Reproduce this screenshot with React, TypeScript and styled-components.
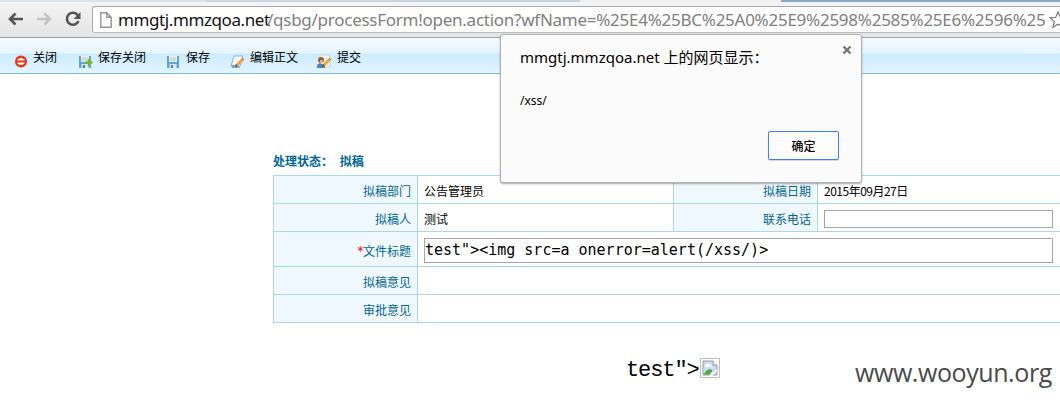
import React from "react";
import styled, { createGlobalStyle } from "styled-components";

const cjk = `"Noto Sans CJK SC"`;

const GlobalStyle = createGlobalStyle`
  * { box-sizing: border-box; }
  html, body { margin: 0; background: #fff; overflow: hidden; }
  body { font: 12px/16px ${cjk}, sans-serif; color: #000; }
`;

const Window = styled.div`
  position: relative;
  width: 1060px;
  height: 402px;
  overflow: hidden;
  display: flex;
  flex-direction: column;
`;

const TabStrip = styled.div`
  flex: none;
  display: flex;
  height: 2px;
  background: #e6eaee;
  border-bottom: 1px solid #9aa3aa;
`;

const TabEdge = styled.div<{ $w: number; $c: string }>`
  width: ${(p) => p.$w}px;
  height: 2px;
  background: ${(p) => p.$c};
`;

const BrowserBar = styled.div`
  flex: none;
  display: flex;
  align-items: flex-start;
  height: 36px;
  padding: 4px 0 0 8px;
  background: linear-gradient(#f4f4f4, #e4e4e4);
  border-bottom: 1px solid #a5a5a5;
`;

const NavIcon = styled.svg<{ $gap: number }>`
  flex: none;
  margin: 5px ${(p) => p.$gap}px 0 0;
`;

const AddressField = styled.div`
  flex: 1;
  display: flex;
  align-items: center;
  height: 27px;
  padding-left: 7px;
  background: #fff;
  border: 1px solid #a9a9a9;
  border-bottom-color: #bcbcbc;
  border-right: 0;
  border-radius: 3px 0 0 3px;
  overflow: hidden;
`;

const FieldIcon = styled.svg`
  flex: none;
`;

const Url = styled.div`
  flex: none;
  display: flex;
  width: 931px;
  margin-left: 6px;
  font: 17px/24px "Noto Sans", sans-serif;
  white-space: nowrap;
  color: #808080;
`;

const Host = styled.span`
  width: 149px;
  color: #111;
  letter-spacing: -0.4px;
`;

const Path = styled.span`
  letter-spacing: -0.26px;
`;

const ActionBar = styled.div`
  flex: none;
  display: flex;
  height: 36px;
  padding-left: 14px;
  background: linear-gradient(#f3faff 0, #e6f5ff 15px, #cbecff 16px, #e4f4ff 35px);
  border-bottom: 1px solid #7dbbe2;
`;

const Action = styled.div<{ $w: number }>`
  display: flex;
  width: ${(p) => p.$w}px;
  padding-top: 11px;
  white-space: nowrap;
`;

const ActionIcon = styled.svg`
  flex: none;
  margin: 5px 5px 0 0;
`;

const Status = styled.div`
  flex: none;
  margin: 79px 0 6px 273px;
  font-weight: 700;
  color: #069;
  white-space: pre;
  word-spacing: 4px;
`;

const Form = styled.div`
  flex: none;
  width: 800px;
  margin-left: 273px;
  border-top: 1px solid #aad7ea;
  border-left: 1px solid #aad7ea;
`;

const Row = styled.div<{ $h: number }>`
  display: flex;
  height: ${(p) => p.$h}px;
  border-bottom: 1px solid #aad7ea;
`;

const Label = styled.div`
  flex: none;
  display: flex;
  align-items: center;
  justify-content: flex-end;
  width: 144px;
  padding: 3px 6px 0 0;
  background: #f0f8ff;
  border-right: 1px solid #aad7ea;
  color: #069;
`;

const Required = styled.span`
  font: 12px/14px "DejaVu Sans Mono", monospace;
  letter-spacing: -1px;
  color: #f00;
`;

const Value = styled.div<{ $w?: number }>`
  flex: none;
  display: flex;
  align-items: center;
  width: ${(p) => (p.$w ? `${p.$w}px` : "auto")};
  padding: 3px 0 0 6px;
  border-right: ${(p) => (p.$w ? "1px solid #aad7ea" : "0")};
`;

const DateText = styled.span`
  letter-spacing: -0.5px;
`;

const Field = styled.div<{ $w: number; $h: number }>`
  width: ${(p) => p.$w}px;
  height: ${(p) => p.$h}px;
  padding-left: 0;
  border: 1px solid #a6a6a6;
  background: #fff;
  font: 15px/23px "DejaVu Sans Mono", monospace;
  white-space: pre;
`;

const Footer = styled.div`
  display: flex;
  align-items: flex-start;
  margin: 35px 0 0 626px;
`;

const Leftover = styled.div`
  width: 74px;
  padding-top: 1px;
  font: 22px/24px "Liberation Mono", monospace;
  letter-spacing: -1.1px;
`;

const BrokenImage = styled.svg`
  flex: none;
`;

const Watermark = styled.div`
  flex: none;
  margin: -1px 0 0 135px;
  font: 25px/30px "Open Sans", sans-serif;
  letter-spacing: -0.42px;
  color: #4a4a4a;
  white-space: nowrap;
`;

const Dialog = styled.div`
  position: absolute;
  left: 500px;
  top: 34px;
  width: 362px;
  height: 149px;
  padding: 14px 15px 0 19px;
  display: flex;
  flex-direction: column;
  background: #fbfbfb;
  border: 1px solid #b2b2b2;
  border-radius: 3px;
  box-shadow: 0 1px 2px rgba(0, 0, 0, 0.35);
`;

const DialogTitle = styled.div`
  margin-top: -1px;
  font: 15px/18px "Noto Sans", ${cjk}, sans-serif;
  white-space: nowrap;
`;

const DialogHead = styled.div`
  display: flex;
  justify-content: space-between;
`;

const CloseIcon = styled.svg`
  margin: -4px -6px 0 0;
`;

const Message = styled.div`
  margin-top: 27px;
  font: 12px/16px "Noto Sans", sans-serif;
`;

const Confirm = styled.button`
  width: 71px;
  height: 29px;
  margin: 22px 7px 0 auto;
  padding: 0;
  background: #fdfdfd;
  border: 1px solid #4080ee;
  border-radius: 2px;
  box-shadow: 0 1px 1px rgba(0, 0, 0, 0.15);
  font: 500 12px/16px ${cjk}, sans-serif;
  color: #000;
`;

const Disk = () => (
  <>
    <path d="M1 1h12v12H1z" fill="#5aa5dc" />
    <path d="M3 1h8v6H3z" fill="#edf4f8" />
    <path d="M4 3h6M4 5h6" stroke="#b2bcc5" />
    <path d="M3.5 9h7v4h-7z" fill="#dce8f0" />
    <path d="M5 10h2v3H5z" fill="#4383b5" />
  </>
);

const Pencil = () => (
  <>
    <path d="M6 10L12 4l2 2-6 6-3 1z" fill="#f5a13b" />
    <path d="M12 4l2 2" stroke="#d85430" />
    <path d="M5 13l1-3 2 2z" fill="#654832" />
  </>
);

export default function App() {
  return (
    <Window>
      <GlobalStyle />
      <TabStrip>
        <TabEdge $w={206} $c="#d9e3ea" />
        <TabEdge $w={192} $c="#c8d7e2" />
        <TabEdge $w={182} $c="#c3d5e2" />
        <TabEdge $w={201} $c="#f1f1f1" />
        <TabEdge $w={279} $c="#86a9c7" />
      </TabStrip>
      <BrowserBar>
        <NavIcon $gap={14} width="15" height="16" viewBox="0 0 15 16">
          <path d="M15 8H2M7.5 2.5L2 8l5.5 5.5" fill="none" stroke="#555" strokeWidth="2.6" />
        </NavIcon>
        <NavIcon $gap={13} width="15" height="16" viewBox="0 0 15 16">
          <path d="M0 8h13M7.5 2.5L13 8l-5.5 5.5" fill="none" stroke="#c3c3c3" strokeWidth="2.6" />
        </NavIcon>
        <NavIcon $gap={11} width="16" height="16" viewBox="0 0 16 16">
          <path d="M13 4.5A6 6 0 1 0 13.5 10" fill="none" stroke="#555" strokeWidth="2.6" />
          <path d="M15.5 1v7h-7z" fill="#555" />
        </NavIcon>
        <AddressField>
          <FieldIcon width="12" height="16" viewBox="0 0 12 16">
            <path d="M.8 .8h6l4.400 4.400v10H.8zM6.800 .8v4.400h4.400" fill="#fafafa" stroke="#959595" strokeWidth="1.400" />
          </FieldIcon>
          <Url>
            <Host>mmgtj.mmzqoa.net</Host>
            <Path>/qsbg/processForm!open.action?wfName=%25E4%25BC%25A0%25E9%2598%2585%25E6%2596%25</Path>
          </Url>
          <FieldIcon width="18" height="18" viewBox="0 0 18 18">
            <path d="M9 1l2.300 5.300 5.700.5-4.300 3.800 1.300 5.700L9 13.300l-5 3 1.300-5.700L1 6.800l5.700-.5z" fill="#fff" stroke="#777" strokeWidth="1.200" />
          </FieldIcon>
        </AddressField>
      </BrowserBar>
      <ActionBar>
        <Action $w={64}>
          <ActionIcon width="14" height="15" viewBox="0 0 14 15">
            <circle cx="7" cy="7.500" r="6" fill="#ee3317" />
            <path d="M3.500 5.500q3.500-3 7 0v4q-3.500 3-7 0z" fill="#fff" />
            <path d="M3 7.500h8" stroke="#ee3317" strokeWidth="2" />
          </ActionIcon>
          关闭
        </Action>
        <Action $w={88}>
          <ActionIcon width="15" height="15" viewBox="0 -1 15 15">
            <Disk />
            <path d="M11 4v7M7.500 7.500h7" stroke="#77b928" strokeWidth="2.400" />
          </ActionIcon>
          保存关闭
        </Action>
        <Action $w={64}>
          <ActionIcon width="15" height="15" viewBox="0 -1 15 15">
            <Disk />
          </ActionIcon>
          保存
        </Action>
        <Action $w={87}>
          <ActionIcon width="15" height="15" viewBox="0 0 15 15">
            <path d="M4 2h9l-3 10H1z" fill="#f2f9ff" stroke="#86b4d5" />
            <path d="M1 11q4-1 9 2l-1 1H2z" fill="#75a8d3" />
            <Pencil />
          </ActionIcon>
          编辑正文
        </Action>
        <Action $w={60}>
          <ActionIcon width="15" height="15" viewBox="0 0 15 15">
            <path d="M3 1h8l2 2v10H3z" fill="#f4f4f4" stroke="#d0d4d8" />
            <circle cx="4" cy="6" r="3" fill="#986039" />
            <path d="M3 6h3v3H3z" fill="#e3b27c" />
            <path d="M0 14v-3l3-2 2 1 3 1v3z" fill="#4386c4" />
            <Pencil />
          </ActionIcon>
          提交
        </Action>
      </ActionBar>
      <Status>处理状态： 拟稿</Status>
      <Form>
        <Row $h={28}>
          <Label>拟稿部门</Label>
          <Value $w={256}>公告管理员</Value>
          <Label>拟稿日期</Label>
          <Value><DateText>2015年09月27日</DateText></Value>
        </Row>
        <Row $h={28}>
          <Label>拟稿人</Label>
          <Value $w={256}>测试</Value>
          <Label>联系电话</Label>
          <Value><Field $w={229} $h={18} /></Value>
        </Row>
        <Row $h={35}>
          <Label><Required>*</Required>文件标题</Label>
          <Value><Field $w={629} $h={25}>{'test"><img src=a onerror=alert(/xss/)>'}</Field></Value>
        </Row>
        <Row $h={28}>
          <Label>拟稿意见</Label>
          <Value />
        </Row>
        <Row $h={28}>
          <Label>审批意见</Label>
          <Value />
        </Row>
      </Form>
      <Footer>
        <Leftover>{'test">'}</Leftover>
        <BrokenImage width="20" height="20" viewBox="0 0 20 20">
          <path d="M.5 .5h19v19H.5z" fill="#fff" stroke="#c0c0c0" />
          <path d="M3 3h10l4 4v10H3z" fill="#c9dcf5" stroke="#9b9b9b" />
          <path d="M13 3v4h4" fill="#fff" stroke="#9b9b9b" />
          <path d="M5 8q0-2 2-2 2-2 3 1 2 0 2 2H5z" fill="#fff" />
          <path d="M3.500 16.500q5-8 9-4l-3 4z" fill="#55a83b" />
          <path d="M9 18l8-7v2l-5 5z" fill="#fff" />
        </BrokenImage>
        <Watermark>www.wooyun.org</Watermark>
      </Footer>
      <Dialog>
        <DialogHead>
          <DialogTitle>mmgtj.mmzqoa.net 上的网页显示：</DialogTitle>
          <CloseIcon width="10" height="10" viewBox="0 0 10 10">
            <path d="M1.500 1.500l7 7M8.500 1.500l-7 7" stroke="#737373" strokeWidth="2.200" />
          </CloseIcon>
        </DialogHead>
        <Message>/xss/</Message>
        <Confirm>确定</Confirm>
      </Dialog>
    </Window>
  );
}
